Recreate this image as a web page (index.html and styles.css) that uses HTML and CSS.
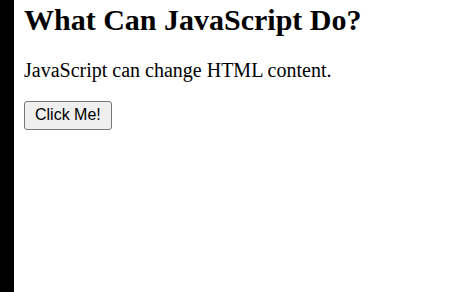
FILE: index.html
```html
<!DOCTYPE html>
<html lang="en">
<head>
    <meta charset="UTF-8">
    <meta name="viewport" content="width=device-width, initial-scale=1.0">
    <title>JavaScript Demo</title>
    <link rel="stylesheet" href="styles.css">
</head>
<body>

    <div class="page">
        <div class="sidebar"></div>

        <main class="content">
            <h1>What Can JavaScript Do?</h1>
            <p id="demo">JavaScript can change HTML content.</p>
            <button type="button" id="clickBtn">Click Me!</button>
        </main>
    </div>

    <script>
        document.getElementById('clickBtn').addEventListener('click', function () {
            document.getElementById('demo').innerHTML = 'Hello JavaScript!';
        });
    </script>
</body>
</html>
```

FILE: styles.css
```css
html,
body {
    height: 100%;
}

body {
    font-family: 'Liberation Serif', 'Times New Roman', serif;
    margin: 0;
    padding: 0;
    background-color: #fff;
    color: #000;
}

.page {
    display: flex;
    min-height: 100%;
}

.sidebar {
    width: 14px;
    flex-shrink: 0;
    background-color: #000;
}

.content {
    padding-left: 10px;
}

.content h1 {
    font-size: 30px;
    font-weight: bold;
    margin: 3px 0 22px;
}

.content p {
    font-size: 20px;
    margin: 20px 0 19px;
}

button {
    font-family: 'Liberation Sans', Arial, sans-serif;
    font-size: 16px;
    color: #000;
    background-color: #efefef;
    border: 1px solid #767676;
    border-radius: 3px;
    padding: 4px 10px 5px;
    cursor: pointer;
}

button:hover {
    background-color: #e5e5e5;
}
```
